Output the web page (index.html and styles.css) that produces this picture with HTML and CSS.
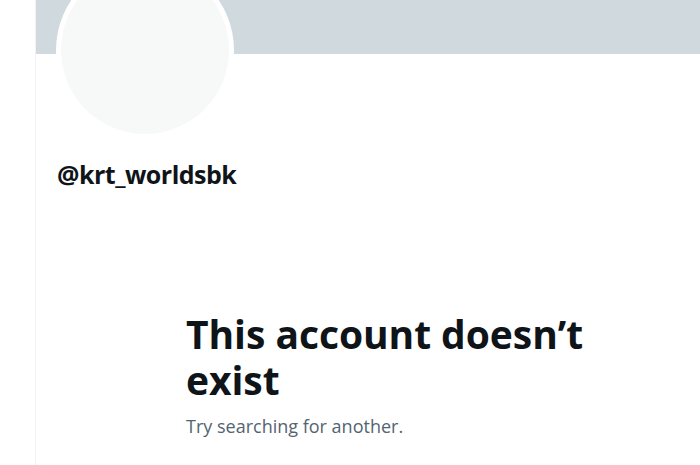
FILE: index.html
```html
<!DOCTYPE html>
<html lang="en">
<head>
<meta charset="utf-8">
<title>Profile</title>
<link rel="stylesheet" href="styles.css">
</head>
<body>
<main class="column">
  <div class="banner"></div>
  <div class="profile">
    <div class="avatar"><div class="avatar-fill"></div></div>
    <div class="handle">@krt_worldsbk</div>
  </div>
  <section class="empty">
    <h1 class="empty-title">This account doesn’t exist</h1>
    <p class="empty-sub">Try searching for another.</p>
  </section>
</main>
</body>
</html>
```
FILE: styles.css
```css
html, body {
  margin: 0;
  padding: 0;
  background: #ffffff;
  height: 100%;
  overflow: hidden;
}
body {
  font-family: "Open Sans", "Noto Sans", "Liberation Sans", sans-serif;
  color: #0f1419;
}
.column {
  margin-left: 35px;
  border-left: 1px solid #eff3f4;
  min-height: 100vh;
  box-sizing: border-box;
}
.banner {
  height: 54px;
  background: #cfd9de;
}
.profile {
  padding-left: 20px;
}
.avatar {
  width: 178px;
  height: 178px;
  margin-top: -93px;
  border-radius: 50%;
  background: #ffffff;
  padding: 5px;
  box-sizing: border-box;
}
.avatar-fill {
  width: 100%;
  height: 100%;
  border-radius: 50%;
  background: #f7f9f9;
}
.handle {
  margin-top: 20px;
  margin-left: 1px;
  font-size: 25px;
  font-weight: 700;
  line-height: 30px;
  letter-spacing: -0.5px;
}
.empty {
  margin-left: 150px;
  margin-top: 122px;
  width: 440px;
}
.empty-title {
  margin: 0;
  font-size: 39px;
  font-weight: 700;
  line-height: 46px;
  letter-spacing: -0.05px;
}
.empty-sub {
  margin: 11px 0 0;
  font-size: 18px;
  line-height: 24px;
  color: #536471;
}
```
